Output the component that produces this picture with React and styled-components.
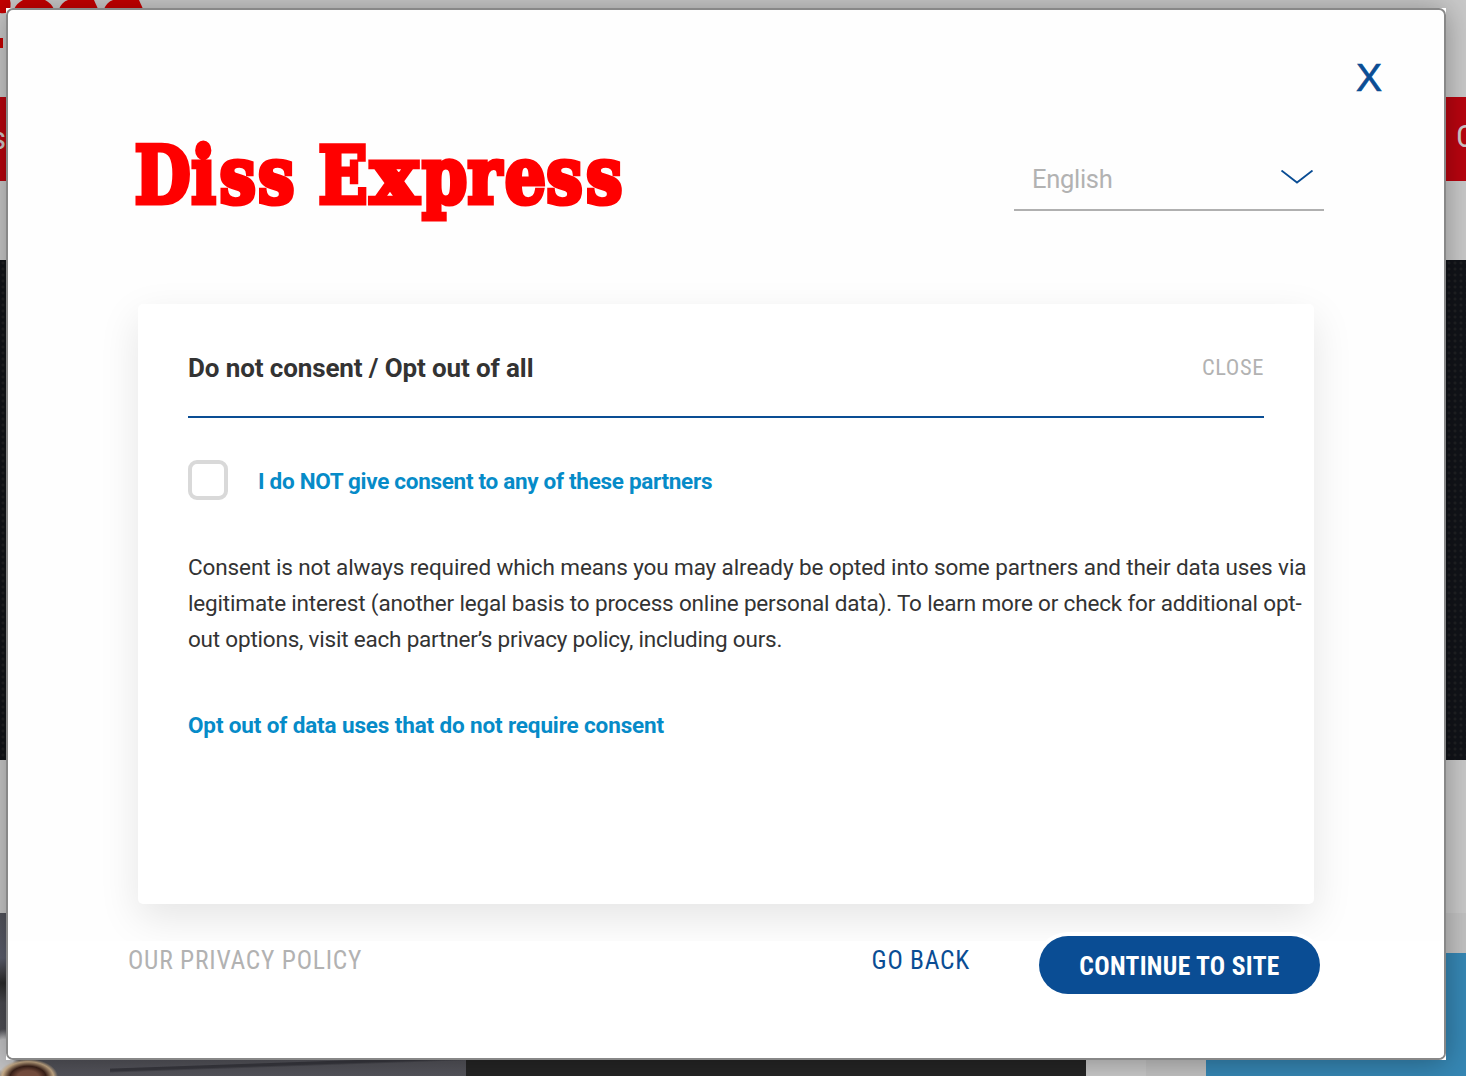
import React from "react";
import styled, { createGlobalStyle } from "styled-components";

const BLUE = "#0a4d94";
const GREY = "#b2b2b2";

const GlobalStyle = createGlobalStyle`
  *, *::before, *::after { box-sizing: border-box; }
  body { margin: 0; overflow: hidden; background: #c9c9c9; }
  button, a { font: inherit; color: inherit; }
`;

const Page = styled.div`
  position: relative;
  height: 1076px;
  overflow: hidden;
  font-family: Roboto, "Liberation Sans", sans-serif;
`;

const Site = styled.div`
  display: flex;
  flex-direction: column;
  height: 100%;
  background: #c9c9c9;
`;

const Masthead = styled.div`
  height: 97px;
  svg { display: block; }
`;

const NavBar = styled.div`
  display: flex;
  justify-content: space-between;
  height: 84px;
  padding-top: 21px;
  background: #b9040f;
  color: #d0c8c8;
  font-size: 32px;
  line-height: 36px;
  font-stretch: 75%;
`;

const NavItem = styled.span`
  width: ${(p) => (p.$end ? "10px" : "6px")};
  display: flex;
  justify-content: ${(p) => (p.$end ? "flex-start" : "flex-end")};
  padding-top: ${(p) => (p.$end ? "0" : "2px")};
  overflow: visible;
`;

const Hero = styled.div`
  height: 500px;
  margin-top: 79px;
  background-color: #111318;
  background-image: radial-gradient(#1f2023 1.2px, transparent 1.8px);
  background-size: 6px 6px;
`;

const Tiles = styled.div`
  display: grid;
  grid-template-columns: 466px 620px 60px 1fr;
  height: 163px;
  margin-top: 153px;
`;

const PhotoTile = styled.div`
  background:
    radial-gradient(ellipse 30px 18px at 28px 164px, #7a5040 0 35%, #3a2018 60%, #c8ac88 85%, transparent 100%),
    radial-gradient(ellipse 16px 26px at 4px 142px, #c4c4c6 0 60%, transparent 100%),
    linear-gradient(178deg, transparent 0 155px, #38383f 156px 158px, transparent 160px) 110px 0 no-repeat,
    linear-gradient(#53545c 0, #5c5f6e 45px, #45454b 58px, #2b2b2b 70px, #4a4a50 90px, #55555c 164px);
`;

const DarkTile = styled.div`
  background: #252525;
`;

const BlankTile = styled.div`
  background: #c9c9c9;
`;

const SideTile = styled.div`
  padding: 40px 0 0 60px;
  background: #c2c2c2;
`;

const BlueBox = styled.div`
  height: 100%;
  background: #3687b4;
`;

const Overlay = styled.div`
  position: absolute;
  inset: 8px 20px 16px 6px;
  background: #fff;
  box-shadow: 0 2px 28px rgba(0, 0, 0, 0.32);
`;

const Modal = styled.section`
  display: flex;
  flex-direction: column;
  height: 100%;
  border: 2px solid #888;
  border-radius: 7px;
  background: #fefefe;
  overflow: hidden;
`;

const TopRow = styled.div`
  display: flex;
  justify-content: flex-end;
  height: 88px;
  padding: 48px 62px 0 0;
`;

const CloseX = styled.button`
  padding: 0;
  border: 0;
  background: none;
  color: ${BLUE};
  font-family: "Liberation Sans", Arial, sans-serif;
  font-size: 39px;
  line-height: 40px;
  height: 40px;
  -webkit-text-stroke: 0.7px ${BLUE};
`;

const BrandRow = styled.header`
  display: flex;
  justify-content: space-between;
  align-items: flex-start;
  height: 206px;
  padding: 32px 120px 0;
`;

const Logo = styled.svg`
  display: block;
  width: 500px;
  height: 101px;
  fill: #f00;
  stroke: #f00;
  stroke-width: 5px;
  font-family: "DejaVu Serif", serif;
  font-weight: 700;
  font-size: 79px;
`;

const LanguageSelect = styled.div`
  display: flex;
  justify-content: space-between;
  align-items: flex-start;
  width: 310px;
  height: 63px;
  margin-top: 18px;
  padding: 13px 10px 0 18px;
  border-bottom: 2px solid #b0b0b0;
  color: ${GREY};
  font-size: 25.5px;
  line-height: 36px;
  letter-spacing: -0.3px;
  svg { margin-top: 9px; }
`;

const LanguageName = styled.span`
  color: ${GREY};
`;

const Card = styled.main`
  height: 600px;
  margin: 0 130px;
  padding: 46px 0 0 50px;
  border-radius: 5px;
  background: #fff;
  box-shadow: 0 14px 40px rgba(0, 0, 0, 0.1);
  flex: none;
`;

const CardHead = styled.div`
  display: flex;
  justify-content: space-between;
  align-items: flex-start;
  height: 68px;
  margin-right: 50px;
  border-bottom: 2px solid ${BLUE};
  line-height: 36px;
`;

const Title = styled.h1`
  margin: 0;
  color: #333;
  font-size: 26px;
  font-weight: 700;
  letter-spacing: -0.12px;
`;

const CardClose = styled.span`
  margin-top: -1px;
  color: ${GREY};
  font-size: 22.5px;
  font-stretch: 75%;
  letter-spacing: 0.6px;
`;

const ConsentRow = styled.label`
  display: flex;
  gap: 30px;
  margin-top: 42px;
`;

const Checkbox = styled.span`
  width: 40px;
  height: 40px;
  border: 4px solid #d9d9d9;
  border-radius: 9px;
  background: #fff;
`;

const Accent = styled.span`
  color: #068bc8;
  font-size: 22.5px;
  font-weight: 700;
  line-height: 36px;
  white-space: nowrap;
  letter-spacing: ${(p) => p.$track}px;
  padding-top: ${(p) => p.$drop || 0}px;
`;

const Copy = styled.p`
  margin: 49px 0 50px;
  color: #333;
  font-size: 22.5px;
  line-height: 36px;
`;

const CopyLine = styled.span`
  display: block;
  white-space: nowrap;
  letter-spacing: ${(p) => p.$track}px;
`;

const Footer = styled.footer`
  position: relative;
  display: flex;
  align-items: flex-start;
  height: 117px;
  margin-top: 37px;
  padding: 0 124px 0 120px;
  background: #fff;
  font-size: 25.5px;
  line-height: 36px;
  font-stretch: 75%;
`;

const FooterLink = styled.a`
  padding-top: 1px;
  color: ${(p) => (p.$primary ? BLUE : GREY)};
  letter-spacing: 0.76px;
  margin-right: ${(p) => (p.$primary ? "69px" : "auto")};
`;

const ContinueButton = styled.button`
  width: 281px;
  height: 58px;
  margin-top: -5px;
  padding: 2px 0 0;
  border: 0;
  border-radius: 29px;
  background: ${BLUE};
  box-shadow: 0 0 0 4px #fff;
  color: #fff;
  font-weight: 700;
  letter-spacing: 0.33px;
`;

export default function App() {
  return (
    <Page>
      <GlobalStyle />
      <Site>
        <Masthead>
          <svg width="160" height="60" fill="#c60000">
            <path d="M0 0H10Q12 7 8 12Q4 14 0 13Z" />
            <path d="M14 9Q17 3 23 0H45Q51 3 54 9Z" />
            <path d="M59 9Q62 2 68 0H94L98 9Z" />
            <path d="M104 9Q107 2 113 0H139L143 9Z" />
            <path d="M0 38H3V48H0Z" />
          </svg>
        </Masthead>
        <NavBar>
          <NavItem>s</NavItem>
          <NavItem $end>C</NavItem>
        </NavBar>
        <Hero />
        <Tiles>
          <PhotoTile />
          <DarkTile />
          <BlankTile />
          <SideTile>
            <BlueBox />
          </SideTile>
        </Tiles>
      </Site>

      <Overlay>
        <Modal>
          <TopRow>
            <CloseX>X</CloseX>
          </TopRow>
          <BrandRow>
            <Logo viewBox="0 0 500 101">
              <g transform="scale(0.82 1)">
                <text y="72.8" x="8 77 111.5 158.5">Diss</text>
                <text y="72.8" x="232">E</text>
              </g>
              <text y="72.8" transform="translate(242.5 0) scale(1.02 1)">x</text>
              <g transform="scale(0.82 1)">
                <text y="72.8" x="358.5 414 459.5 510 558.5">press</text>
              </g>
            </Logo>
            <LanguageSelect>
              <LanguageName>English</LanguageName>
              <svg width="34" height="16" fill="none" stroke={BLUE} strokeWidth="1.8">
                <path d="M1.5 0.5L17 12.5L32.5 0.5" />
              </svg>
            </LanguageSelect>
          </BrandRow>
          <Card>
            <CardHead>
              <Title>Do not consent / Opt out of all</Title>
              <CardClose>CLOSE</CardClose>
            </CardHead>
            <ConsentRow>
              <Checkbox />
              <Accent $track={-0.3} $drop={3}>I do NOT give consent to any of these partners</Accent>
            </ConsentRow>
            <Copy>
              <CopyLine $track={-0.11}>Consent is not always required which means you may already be opted into some partners and their data uses via</CopyLine>
              <CopyLine $track={-0.17}>legitimate interest (another legal basis to process online personal data). To learn more or check for additional opt-</CopyLine>
              <CopyLine $track={-0.21}>out options, visit each partner’s privacy policy, including ours.</CopyLine>
            </Copy>
            <Accent $track={-0.14}>Opt out of data uses that do not require consent</Accent>
          </Card>
          <Footer>
            <FooterLink>OUR PRIVACY POLICY</FooterLink>
            <FooterLink $primary>GO BACK</FooterLink>
            <ContinueButton>CONTINUE TO SITE</ContinueButton>
          </Footer>
        </Modal>
      </Overlay>
    </Page>
  );
}
